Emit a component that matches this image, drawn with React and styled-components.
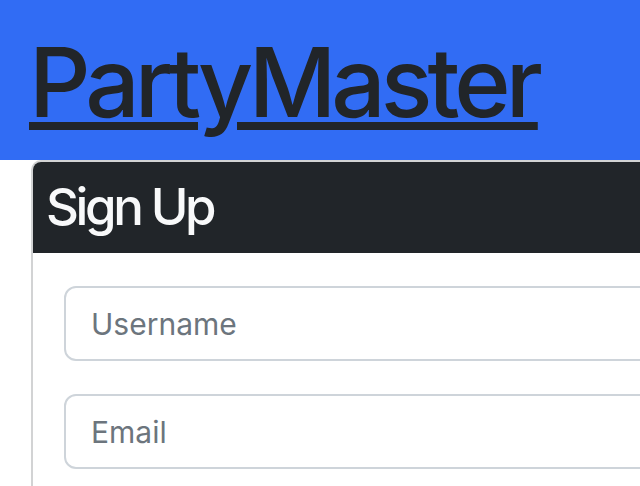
import styled, { createGlobalStyle } from 'styled-components';

const GlobalStyle = createGlobalStyle`
    html, body {
        margin: 0;
        padding: 0;
        background: #ffffff;
        font-family: Inter, "Liberation Sans", sans-serif;
        overflow: hidden;
    }
`

const TopBar = styled.header`
    background: #316cf4;
    height: 160px;
    padding: 34px 0 0 29px;
    box-sizing: border-box;
`

const Brand = styled.h1`
    margin: 0;
    font-size: 96px;
    font-weight: 500;
    line-height: 1;
    letter-spacing: -5px;

    a {
        color: #212529;
        text-decoration: underline;
        text-decoration-thickness: 8px;
        text-underline-offset: 5px;
    }
`

const Main = styled.main`
    padding-left: 31px;
`

const Card = styled.section`
    width: 1000px;
    border: 2px solid #d2d3d4;
    border-bottom: none;
    border-radius: 10px 10px 0 0;
    overflow: hidden;
    background: #ffffff;
`

const CardHeader = styled.div`
    background: #212529;
    color: #f8f9fa;
    height: 91px;
    box-sizing: border-box;
    padding: 19px 13px 0;
`

const CardTitle = styled.h3`
    margin: 0;
    font-size: 51px;
    font-weight: 500;
    line-height: 1;
    letter-spacing: -3.4px;
`

const CardBody = styled.form`
    display: flex;
    flex-direction: column;
    gap: 33px;
    padding: 33px 31px 40px;
`

const Input = styled.input`
    height: 75px;
    box-sizing: border-box;
    border: 2px solid #ced4da;
    border-radius: 12px;
    padding: 0 25px;
    font-family: Inter, "Liberation Sans", sans-serif;
    font-size: 30px;
    color: #212529;
    background: #ffffff;
    outline: none;

    &::placeholder {
        color: #6c757d;
    }
`

export default function App() {
    return (
        <>
            <GlobalStyle />
            <TopBar>
                <Brand>
                    <a href="#">PartyMaster</a>
                </Brand>
            </TopBar>
            <Main>
                <Card>
                    <CardHeader>
                        <CardTitle>Sign Up</CardTitle>
                    </CardHeader>
                    <CardBody>
                        <Input type="text" name="username" placeholder="Username" />
                        <Input type="email" name="email" placeholder="Email" />
                    </CardBody>
                </Card>
            </Main>
        </>
    )
}
